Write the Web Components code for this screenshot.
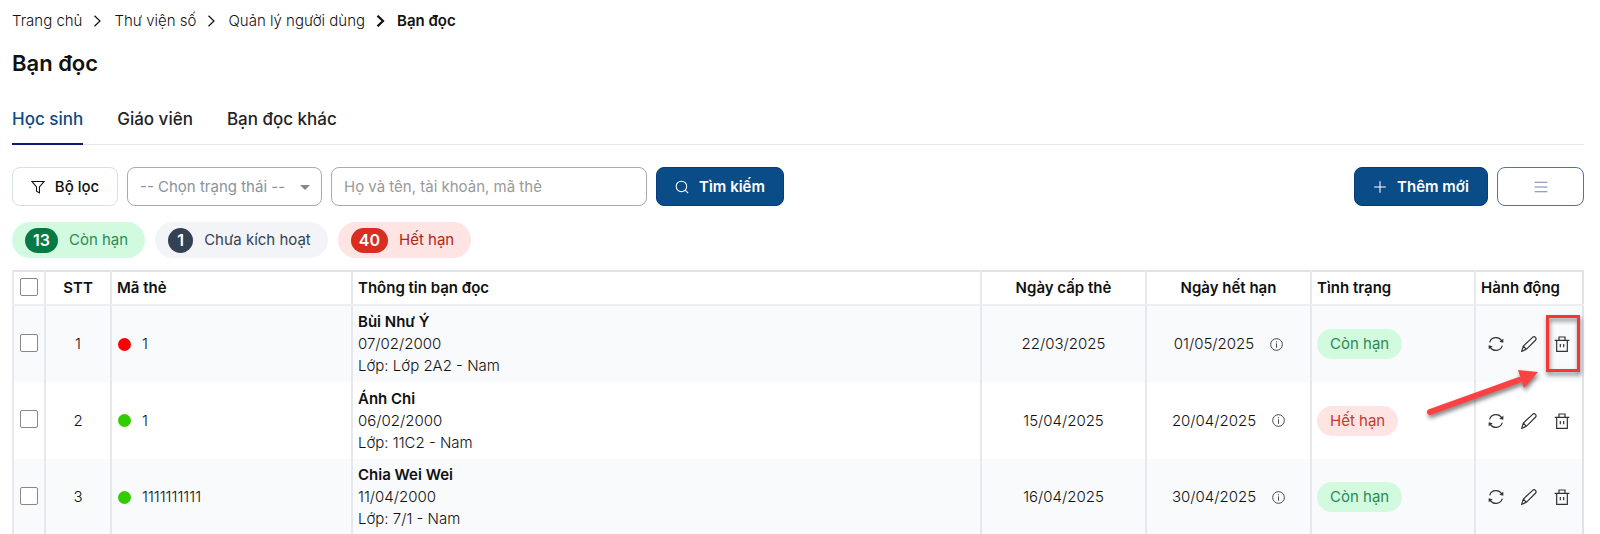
<!DOCTYPE html>
<html lang="vi">
<head>
<meta charset="utf-8">
<meta name="viewport" content="width=device-width, initial-scale=1">
<title>Bạn đọc</title>
<style>
  body { margin: 0; background: #fff; color: #111; font: 300 15px/22px Inter, "Noto Sans", sans-serif; overflow-x: hidden; }
</style>
</head>
<body>
<reader-page></reader-page>
<script>
const define = (name, html, setup) => {
  const tpl = document.createElement('template');
  tpl.innerHTML = html;
  customElements.define(name, class extends HTMLElement {
    constructor() {
      super();
      this.attachShadow({ mode: 'open' });
    }
    connectedCallback() {
      if (this.shadowRoot.childNodes.length) return;
      if (setup) setup(this, tpl);
      else this.shadowRoot.append(tpl.content.cloneNode(true));
    }
  });
};

const ICONS = {
  chevron: '<path d="M5 1.500l11 10.500-11 10.500" stroke-width="2.400"/>',
  chevronBold: '<path d="M5 1.500l11 10.500-11 10.500" stroke-width="4.500"/>',
  filter: '<path d="M1.500 2.500h21l-8 9.500v10l-5-3v-7z"/>',
  search: '<circle cx="11" cy="11" r="9"/><path d="M17.500 17.500l5 5"/>',
  plus: '<path d="M12 2v20M2 12h20"/>',
  menu: '<path d="M1 4h22M1 12h22M1 20h22"/>',
  info: '<circle cx="12" cy="12" r="10.800"/><path d="M12 10v8M12 6v2"/>',
  refresh: '<path d="M2.500 9.500A10 10 0 0 1 20.500 7M21.500 14.500A10 10 0 0 1 3.500 17"/><path d="M23 4v6l-6-1.500zM1 20v-6l6 1.500z" fill="currentColor" stroke="none"/>',
  pencil: '<path d="M1 23l2.500-8L17.500 2c3-2.500 6.500 1.500 4.500 4L8 20zM3.500 15l4.500 5"/>',
  trash: '<path d="M1 6.500h22M4 6.500v16.500h16V6.500M7.500 6V1.500h9V6M9.500 12v5M14.500 12v5"/>'
};
define('ui-icon', '', el => {
  el.shadowRoot.innerHTML = `<style>:host{display:inline-flex;width:14px;height:14px;flex:none}svg{width:100%;height:100%;fill:none;stroke:currentColor;stroke-width:1.8}</style>
  <svg viewBox="0 0 24 24" aria-hidden="true">${ICONS[el.getAttribute('name')]}</svg>`;
});

define('bread-crumbs', `<style>
  :host{display:block;font-size:15px;line-height:22px}
  nav{display:flex;align-items:center;gap:10px}
  a{color:#111;text-decoration:none}
  b{font-weight:600;color:#111}
  ui-icon{width:12px;height:12px}
</style>
<nav aria-label="Breadcrumb">
  <a href="#home">Trang chủ</a><ui-icon name="chevron"></ui-icon>
  <a href="#library">Thư viện số</a><ui-icon name="chevron"></ui-icon>
  <a href="#users">Quản lý người dùng</a><ui-icon name="chevronBold"></ui-icon>
  <b>Bạn đọc</b>
</nav>`);

define('page-tabs', `<style>
  :host{display:block}
  nav{display:flex;gap:34px;border-bottom:1px solid #e5e7eb}
  a{padding:13px 0 11px;margin-bottom:-1px;font-size:17px;line-height:26px;font-weight:500;color:#222;text-decoration:none;border-bottom:2px solid transparent}
  a[aria-current]{color:#0b4a85;border-color:#0a1c80}
</style>
<nav aria-label="Nhóm bạn đọc">
  <a href="#students" aria-current="page">Học sinh</a>
  <a href="#teachers">Giáo viên</a>
  <a href="#others">Bạn đọc khác</a>
</nav>`);

define('ui-button', '', el => {
  el.shadowRoot.innerHTML = `<style>
  :host{display:block}
  button{display:flex;align-items:center;justify-content:center;gap:10px;width:100%;height:39px;box-sizing:border-box;padding:0 18px;border:1px solid #d9dde6;border-radius:8px;background:#fff;color:#111;font:500 15px/22px Inter,sans-serif;white-space:nowrap}
  :host([kind=primary]) button{background:#0a4c88;border-color:#083b7c;color:#fff;font-weight:600}
  :host([kind=outline]) button{border-color:#4f74a8;color:#6f87ad}
  </style>
  <button type="button" ${el.hasAttribute('label') ? `aria-label="${el.getAttribute('label')}"` : ''}><ui-icon name="${el.getAttribute('icon')}"></ui-icon><slot></slot></button>`;
  if (!el.textContent) el.shadowRoot.querySelector('slot').remove();
});

define('filter-bar', `<style>
  :host{display:block}
  form{display:flex;gap:9px}
  .status{position:relative;flex:0 0 195px}
  .status::after{content:"";position:absolute;right:12px;top:18px;border:5px solid transparent;border-top-color:#888;border-bottom:0;pointer-events:none}
  select,input{width:100%;height:39px;box-sizing:border-box;border:1px solid #aaa;border-radius:8px;background:#fff;font:400 15px/22px Inter,sans-serif;color:#8b929c;padding:0 12px;appearance:none}
  .search{flex:0 1 316px}
  input::placeholder{color:#999;opacity:1}
  .filter{width:106px}.find{width:128px}.add{width:134px;margin-left:auto}.menu{width:87px}
</style>
<form>
  <ui-button class="filter" icon="filter">Bộ lọc</ui-button>
  <label class="status"><select aria-label="Trạng thái"><option>-- Chọn trạng thái --</option><option>Còn hạn</option><option>Chưa kích hoạt</option><option>Hết hạn</option></select></label>
  <label class="search"><input type="text" aria-label="Tìm kiếm" placeholder="Họ và tên, tài khoản, mã thẻ"></label>
  <ui-button class="find" icon="search" kind="primary">Tìm kiếm</ui-button>
  <ui-button class="add" icon="plus" kind="primary">Thêm mới</ui-button>
  <ui-button class="menu" icon="menu" kind="outline" label="Menu"></ui-button>
</form>`);

define('count-pill', '', el => {
  el.shadowRoot.innerHTML = `<style>
  :host{display:flex;align-items:center;gap:11px;height:36px;box-sizing:border-box;padding:0 17px 0 13px;border-radius:18px;background:#f2f4f8;color:#364152;font-weight:400}
  b{min-width:25px;height:25px;box-sizing:border-box;padding:0 8px;border-radius:13px;background:#344054;color:#fff;font-size:16px;line-height:25px;font-weight:600;text-align:center}
  :host([tone=ok]){background:#d1fadf;color:#2c8a55}:host([tone=ok]) b{background:#067a46}
  :host([tone=bad]){background:#fee4e2;color:#b42318}:host([tone=bad]) b{background:#d92d20}
  </style><b>${el.getAttribute('count')}</b><span><slot></slot></span>`;
});

define('status-badge', '', el => {
  el.shadowRoot.innerHTML = `<style>
  :host{display:inline-block;padding:4px 13px;border-radius:15px;line-height:22px;background:#d1fadf;color:#2c8a55;font-weight:400}
  :host([tone=bad]){background:#fee4e2;color:#c23a30}
  </style><slot></slot>`;
});

define('callout-mark', `<style>
  :host{position:absolute;inset:-21px -4px auto auto;width:152px;height:112px;pointer-events:none}
  svg{display:block;overflow:visible;filter:drop-shadow(1px 3px 2px rgba(0,0,0,.5))}
</style>
<svg width="152" height="112" viewBox="0 0 152 112" aria-hidden="true">
  <rect x="118.500" y="1.500" width="31" height="54" fill="none" stroke="#f43636" stroke-width="3"/>
  <path d="M1 97L90 65" stroke="#fb4141" stroke-width="6" stroke-linecap="round"/>
  <path d="M109 57L89 55L95 73z" fill="#fb4141"/>
</svg>`);

define('row-actions', '', el => {
  el.shadowRoot.innerHTML = `<style>
  :host{display:flex;position:relative;justify-content:space-between;padding:0 7px;height:16px}
  button{display:flex;padding:0;border:0;background:none;color:#333;height:16px}
  ui-icon{width:16px;height:16px}
  </style>
  <button type="button" aria-label="Gia hạn"><ui-icon name="refresh"></ui-icon></button>
  <button type="button" aria-label="Sửa"><ui-icon name="pencil"></ui-icon></button>
  <button type="button" aria-label="Xóa"><ui-icon name="trash"></ui-icon></button>
  ${el.hasAttribute('marked') ? '<callout-mark></callout-mark>' : ''}`;
});

const READERS = [
  ['#f00', '1', 'Bùi Như Ý', '07/02/2000', 'Lớp 2A2 - Nam', '22/03/2025', '01/05/2025', true],
  ['#3c0', '1', 'Ánh Chi', '06/02/2000', '11C2 - Nam', '15/04/2025', '20/04/2025', false],
  ['#3c0', '1111111111', 'Chia Wei Wei', '11/04/2000', '7/1 - Nam', '16/04/2025', '30/04/2025', true]
];
define('reader-table', '', el => {
  el.shadowRoot.innerHTML = `<style>
  :host{display:block}
  table{width:100%;table-layout:fixed;border-collapse:collapse;border:2px solid #e2e3e6}
  th,td{border-left:2px solid #e6e8ee;text-align:left;vertical-align:middle;padding:5px}
  th{height:34px;box-sizing:border-box;padding-block:0;font-weight:600;border-bottom:2px solid #eceef0}
  td{height:77px;box-sizing:border-box;color:#111}
  tbody tr:nth-child(odd){background:#f9fafc}
  .c{text-align:center}
  .box{padding:0;text-align:center}
  input{appearance:none;display:block;width:18px;height:18px;margin:0 auto 3px;box-sizing:border-box;border:1px solid #888;border-radius:2px;background:#fff}
  .code,.until{display:flex;align-items:center}
  .code{gap:11px;padding-left:1px}
  .until{gap:16px;justify-content:center}
  .code i{width:13px;height:13px;border-radius:50%}
  b{font-weight:600;color:#111}
  ui-icon{width:13px;height:13px;color:#444}
  .info div{line-height:22px}
  </style>
  <table>
  <colgroup><col style="width:32px"><col style="width:66px"><col style="width:241px"><col><col style="width:165px"><col style="width:165px"><col style="width:164px"><col style="width:108px"></colgroup>
  <thead><tr><th class="box"><input type="checkbox" aria-label="Chọn tất cả"></th><th class="c">STT</th><th>Mã thẻ</th><th>Thông tin bạn đọc</th><th class="c">Ngày cấp thẻ</th><th class="c">Ngày hết hạn</th><th>Tình trạng</th><th>Hành động</th></tr></thead>
  <tbody>${READERS.map(([dot, code, name, born, group, from, to, ok], i) => `<tr>
    <td class="box"><input type="checkbox" aria-label="Chọn ${name}"></td>
    <td class="c">${i + 1}</td>
    <td><div class="code"><i style="background:${dot}"></i>${code}</div></td>
    <td class="info"><div><b>${name}</b></div><div>${born}</div><div>Lớp: ${group}</div></td>
    <td class="c">${from}</td>
    <td><div class="until">${to}<ui-icon name="info"></ui-icon></div></td>
    <td><status-badge tone="${ok ? 'ok' : 'bad'}">${ok ? 'Còn hạn' : 'Hết hạn'}</status-badge></td>
    <td><row-actions ${i ? '' : 'marked'}></row-actions></td></tr>`).join('')}</tbody></table>`;
});

define('reader-page', `<style>
  :host{display:block;padding:10px 16px 0 12px}
  h1{margin:17px 0 0;font-size:22px;line-height:28px;font-weight:600;color:#111}
  page-tabs{margin-top:16px}
  filter-bar{margin-top:22px}
  .counts{display:flex;gap:10px;margin:16px 0 12px}
</style>
<bread-crumbs></bread-crumbs>
<main>
<h1>Bạn đọc</h1>
<page-tabs></page-tabs>
<filter-bar></filter-bar>
<div class="counts"><count-pill tone="ok" count="13">Còn hạn</count-pill><count-pill count="1">Chưa kích hoạt</count-pill><count-pill tone="bad" count="40">Hết hạn</count-pill></div>
<reader-table></reader-table>
</main>`);
</script>
</body>
</html>
